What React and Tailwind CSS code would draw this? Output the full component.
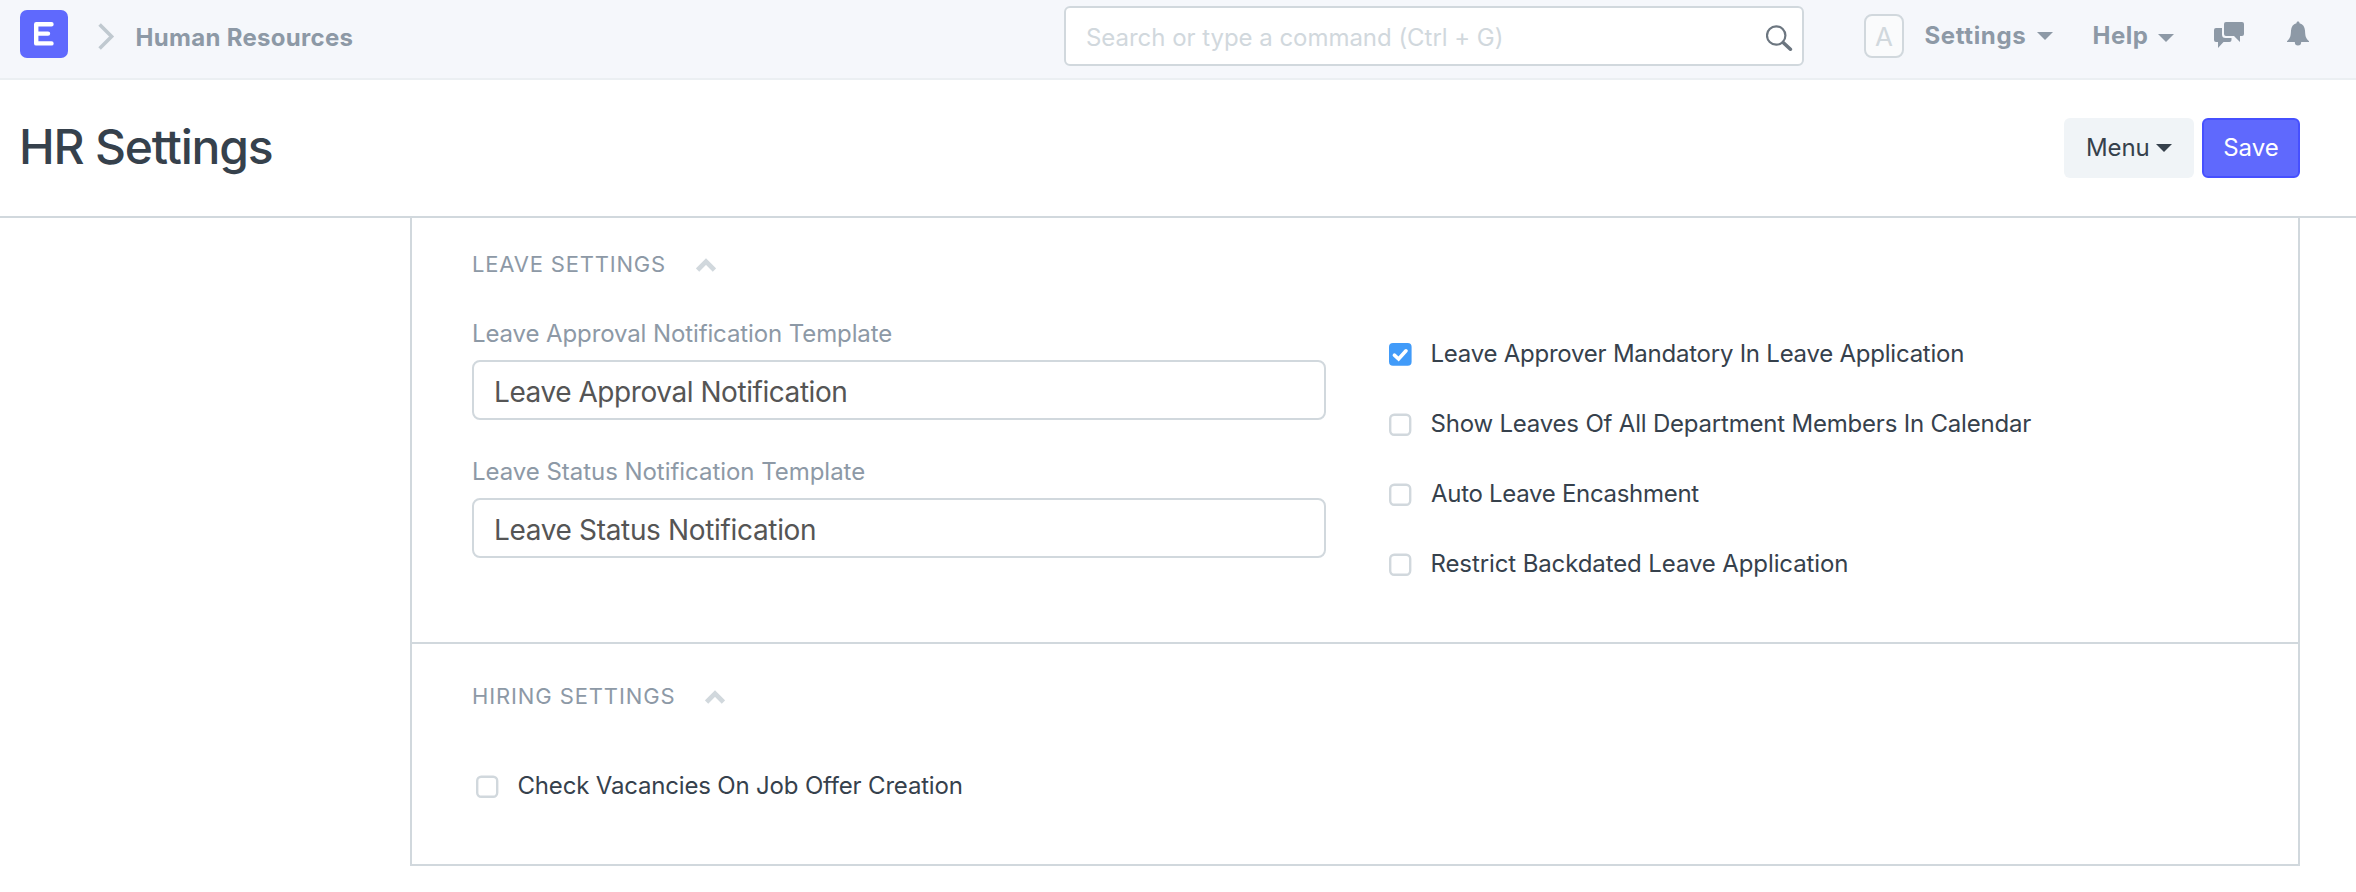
function Caret({ className }) {
  return (
    <svg className={className} width="16" height="8" viewBox="0 0 16 8" fill="currentColor">
      <path d="M0 0H16L8 8Z" />
    </svg>
  );
}

function Logo() {
  return (
    <div className="mt-[10px] h-12 w-12 rounded-[7px] bg-[#5f69fd]">
      <svg width="48" height="48" viewBox="0 0 48 48" fill="none" stroke="#fff" strokeWidth="4.4" strokeLinecap="round">
        <path d="M31.5 14.2H16.2V33.4H31.5M16.2 23.6H28" strokeLinejoin="round" />
      </svg>
    </div>
  );
}

function Navbar() {
  return (
    <header className="flex h-20 items-start border-b-2 border-[#ebeff2] bg-[#f5f7fb] pl-5 text-[#8d99a6]">
      <Logo />
      <svg className="mt-[22px] ml-[30px]" width="18" height="30" viewBox="0 0 18 30" fill="none" stroke="#c0c9d0" strokeWidth="3.6">
        <path d="M1.6 2.6L13.6 14.6L1.6 26.6" />
      </svg>
      <div className="ml-[19.5px] w-[928.5px] pt-[18px] text-2xl leading-10 font-bold tracking-[0.3px]">Human Resources</div>
      <div className="mt-1.5 flex h-[60px] w-[740px] items-start justify-between rounded-md border-2 border-[#d1d8dd] bg-white pl-5">
        <span className="pt-[10px] text-2xl leading-10 tracking-[-0.036px] text-[#d1d8dd]">Search or type a command (Ctrl + G)</span>
        <svg className="mt-[15px] mr-2" width="28" height="28" viewBox="0 0 28 28" fill="none" stroke="#6c7680">
          <circle cx="10.2" cy="12.5" r="9.2" strokeWidth="2.2" />
          <path d="M17.4 19.7L24.4 26.2" strokeWidth="3.6" strokeLinecap="round" />
        </svg>
      </div>
      <div className="mt-3.5 ml-[60px] h-11 w-10 rounded-lg border-2 border-[#d1d8dd] bg-[#fafbfc] text-center text-[26px] leading-[41px] text-[#d1d8dd]">
        A
      </div>
      <div className="ml-5 flex w-[168px] pt-[16px] text-2xl leading-10 font-bold">
        <span className="w-[112.5px] pl-[0.5px] tracking-[0.62px]">Settings</span>
        <Caret className="mt-[16px]" />
      </div>
      <div className="flex w-[122px] pt-[16px] text-2xl leading-10 font-bold">
        <span className="w-[66px] pl-[0.5px] tracking-[0.5px]">Help</span>
        <Caret className="mt-[18px]" />
      </div>
      <svg className="mt-5 w-[72px]" width="72" height="30" viewBox="0 0 72 30" fill="currentColor">
        <path d="M12 2H28Q30 2 30 4V14Q30 16 28 16H26V22L20 16H12Q10 16 10 14V4Q10 2 12 2Z" />
        <path d="M2 8H8V14.5Q8 18 11.5 18H17.5V20Q17.5 22 15.5 22H9.5L4 28V22H2Q0 22 0 20V10Q0 8 2 8Z" />
      </svg>
      <svg className="mt-5 ml-px" width="22" height="28" viewBox="0 0 22 28" fill="currentColor">
        <path d="M11 1.5C12 1.5 12.5 2.2 12.5 3.2C16 4 17.7 6.8 18 10.5C18.3 16 18.5 18 22 21.2V22H14.2A3.2 3.6 0 0 1 7.8 22H0V21.2C3.5 18 3.7 16 4 10.5C4.3 6.8 6 4 9.5 3.2C9.5 2.2 10 1.5 11 1.5Z" />
      </svg>
    </header>
  );
}

function PageHead() {
  return (
    <div className="flex h-[138px] items-start border-b-2 border-[#d1d8dd] pl-[19px] text-[#36414c]">
      <h1 className="w-[2045px] pt-[37px] text-[48px] leading-[60px] font-medium tracking-[-1.22px]">HR Settings</h1>
      <button className="mt-[38px] flex h-[60px] w-[130px] items-start rounded-md bg-[#f0f4f7] pl-[22px] text-2xl leading-[60px]">
        <span className="w-[70px] text-left tracking-[-0.117px]">Menu</span>
        <Caret className="mt-[26px]" />
      </button>
      <button className="mt-[38px] ml-2 h-[60px] w-[98px] rounded-md border-2 border-[#4650ff] bg-[#5f69fd] text-center text-2xl leading-[54px] text-white">
        Save
      </button>
    </div>
  );
}

function SectionTitle({ children, className }) {
  return (
    <div className="flex h-10 items-start text-[22px] leading-10 text-[#8d99a6]">
      <span className={className}>{children}</span>
      <svg className="mt-[14px]" width="20" height="14" viewBox="0 0 20 14" fill="none" stroke="#d1d8dd" strokeWidth="4.6">
        <path d="M1.6 12L10 3.6L18.4 12" />
      </svg>
    </div>
  );
}

function Field({ label, value, labelClass, valueClass }) {
  return (
    <div className="h-[138px]">
      <div className={`h-[46px] text-2xl leading-10 text-[#8d99a6] ${labelClass}`}>{label}</div>
      <div className={`h-[60px] rounded-lg border-2 border-[#d1d8dd] pl-5 text-[28px] leading-[61px] text-[#555] ${valueClass}`}>{value}</div>
    </div>
  );
}

function Check({ label, checked, className }) {
  return (
    <label className="flex h-[70px] items-start">
      {checked ? (
        <svg className="mt-px" width="23" height="23" viewBox="0 0 23 23" fill="none">
          <rect width="22.6" height="22.8" rx="4" fill="#419bf9" />
          <path d="M5.4 12.2L9.6 16L17 7.8" stroke="#fff" strokeWidth="3.6" strokeLinecap="round" />
        </svg>
      ) : (
        <svg className="mt-px" width="23" height="23" viewBox="0 0 23 23">
          <rect x="1.2" y="1.7" width="20" height="20" rx="4" fill="#fff" stroke="#d1d8dd" strokeWidth="2.4" />
        </svg>
      )}
      <span className={`text-2xl leading-[23px] text-[#36414c] ${className}`}>{label}</span>
    </label>
  );
}

export default function App() {
  return (
    <div className="h-[892px] w-[2356px] overflow-hidden bg-white font-[Inter,sans-serif]">
      <Navbar />
      <PageHead />
      <main className="ml-[410px] w-[1890px] border-x-2 border-b-2 border-[#d1d8dd]">
        <section className="h-[426px] border-b-2 border-[#d1d8dd] pt-[26px] pl-[60px]">
          <SectionTitle className="w-[224px] tracking-[0.8px]">LEAVE SETTINGS</SectionTitle>
          <div className="flex">
            <div className="w-[854px] pt-[30px]">
              <Field
                label="Leave Approval Notification Template"
                value="Leave Approval Notification"
                labelClass="tracking-[-0.11px]"
                valueClass="tracking-[-0.44px]"
              />
              <Field
                label="Leave Status Notification Template"
                value="Leave Status Notification"
                labelClass="tracking-[-0.04px]"
                valueClass="tracking-[-0.34px]"
              />
            </div>
            <div className="ml-[63px] pt-[58px]">
              <Check checked label="Leave Approver Mandatory In Leave Application" className="ml-[18.5px] tracking-[-0.24px]" />
              <Check label="Show Leaves Of All Department Members In Calendar" className="ml-[18.5px] tracking-[-0.2px]" />
              <Check label="Auto Leave Encashment" className="ml-[19px] tracking-[-0.3px]" />
              <Check label="Restrict Backdated Leave Application" className="ml-[18.5px] tracking-[-0.11px]" />
            </div>
          </div>
        </section>
        <section className="h-[220px] pt-[32px] pl-[60px]">
          <SectionTitle className="w-[233px] tracking-[0.88px]">HIRING SETTINGS</SectionTitle>
          <div className="pt-[58px] pl-1">
            <Check label="Check Vacancies On Job Offer Creation" className="ml-[18.5px] tracking-[-0.18px]" />
          </div>
        </section>
      </main>
    </div>
  );
}
